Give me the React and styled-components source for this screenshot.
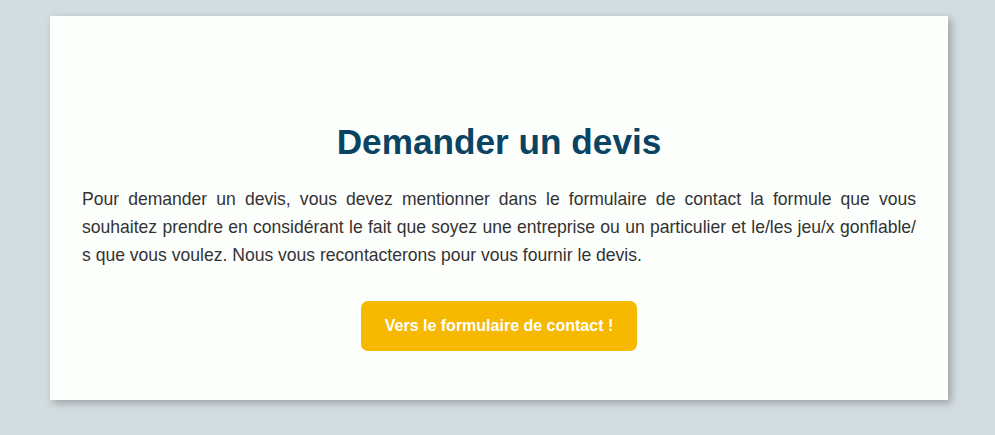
import React from "react";
import styled, { createGlobalStyle } from "styled-components";

const Global = createGlobalStyle`
  html, body { margin: 0; padding: 0; background: #d3dde0; }
  body { font-family: "Liberation Sans", Arial, sans-serif; }
`;

const Page = styled.div`
  padding: 16px 47px 36px 50px;
`;

const Card = styled.section`
  background: #fdfffd;
  box-shadow: 3px 3px 8px rgba(0, 0, 0, 0.28);
  padding: 105px 32px 49px;
  display: flex;
  flex-direction: column;
  align-items: center;
`;

const Title = styled.h2`
  margin: 0;
  font-size: 35.2px;
  line-height: 42px;
  font-weight: 700;
  color: #0b4462;
  text-align: center;
`;

const Text = styled.p`
  margin: 22px 0 0;
  font-size: 17.56px;
  line-height: 28.2px;
  color: #333333;
  text-align: justify;
  align-self: stretch;
`;

const Button = styled.a`
  margin-top: 31px;
  height: 50px;
  padding: 0 24px;
  display: inline-flex;
  align-items: center;
  justify-content: center;
  background: #f7b800;
  color: #ffffff;
  font-size: 16px;
  font-weight: 700;
  border-radius: 7px;
  text-decoration: none;
`;

export default function App() {
  return (
    <>
      <Global />
      <Page>
        <Card>
          <Title>Demander un devis</Title>
          <Text>
            Pour demander un devis, vous devez mentionner dans le formulaire de contact la formule que vous souhaitez prendre en considérant le fait que soyez une entreprise ou un particulier et le/les jeu/x gonflable/<wbr />s que vous voulez. Nous vous recontacterons pour vous fournir le devis.
          </Text>
          <Button href="#">Vers le formulaire de contact !</Button>
        </Card>
      </Page>
    </>
  );
}
